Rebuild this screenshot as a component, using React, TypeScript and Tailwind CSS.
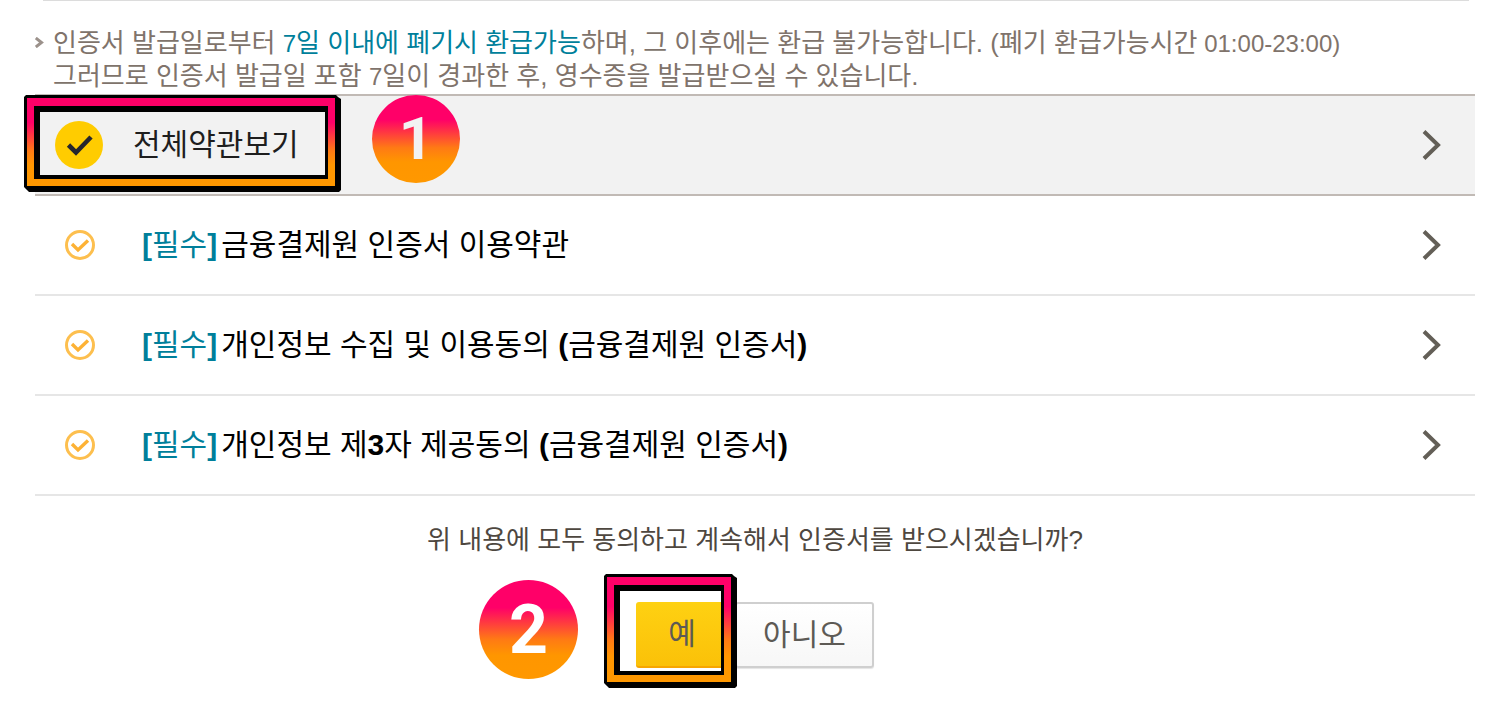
import React, { useId, useState } from "react";

const GRADIENT_STOPS = [
  { offset: "0%", color: "#ff0068" },
  { offset: "28%", color: "#ff0068" },
  { offset: "60%", color: "#ff7a14" },
  { offset: "76%", color: "#ff9600" },
  { offset: "100%", color: "#ff9800" },
];

function Stops() {
  return (
    <>
      {GRADIENT_STOPS.map((s) => (
        <stop key={s.offset} offset={s.offset} stopColor={s.color} />
      ))}
    </>
  );
}

function HighlightFrame({ width, height, className }: { width: number; height: number; className: string }) {
  const id = useId();
  const w = width;
  const h = height;
  const inner = `M16 17V${h - 17}H${w - 16}V17Z`;
  return (
    <svg
      aria-hidden="true"
      width={w}
      height={h}
      viewBox={`0 0 ${w} ${h}`}
      className={`pointer-events-none absolute max-w-none ${className}`}
    >
      <defs>
        <linearGradient id={id} x1="0" y1="0" x2="0" y2="1">
          <Stops />
        </linearGradient>
      </defs>
      <path
        fillRule="evenodd"
        d={`M2 0H${w - 5}L${w - 3} 2L${w} 4V${h - 2}L${w - 2} ${h}H5L3 ${h - 2}L0 ${h - 5}V2Z ${inner}`}
      />
      <path
        fillRule="evenodd"
        fill={`url(#${id})`}
        d={`M3 3H${w - 6}V${h - 6}H3Z M10 11V${h - 13}H${w - 13}V11Z`}
      />
    </svg>
  );
}

function StepBadge({ step, className }: { step: number; className: string }) {
  return (
    <span
      className={`pointer-events-none absolute flex items-center justify-center rounded-full bg-[linear-gradient(#ff0068_0%,#ff0068_28%,#ff7a14_60%,#ff9600_76%,#ff9800_100%)] font-[Roboto,sans-serif] font-bold ${className}`}
    >
      {step}
    </span>
  );
}

function Chevron() {
  return (
    <svg aria-hidden="true" width="20" height="32" viewBox="0 0 20 32" fill="none" stroke="#635f57" strokeWidth="4">
      <path d="M2 2.5L16 16L2 29.5" />
    </svg>
  );
}

function DetailButton({ label }: { label: string }) {
  return (
    <button type="button" aria-label={label} className="mr-[33px] ml-auto shrink-0 cursor-pointer">
      <Chevron />
    </button>
  );
}

const TERMS = [
  { id: "term-1", parts: [{ text: "금융결제원 인증서 이용약관" }] },
  {
    id: "term-2",
    parts: [
      { text: "개인정보 수집 및 이용동의 " },
      { text: "(", strong: true },
      { text: "금융결제원 인증서" },
      { text: ")", strong: true },
    ],
  },
  {
    id: "term-3",
    parts: [
      { text: "개인정보 제" },
      { text: "3", strong: true },
      { text: "자 제공동의 " },
      { text: "(", strong: true },
      { text: "금융결제원 인증서" },
      { text: ")", strong: true },
    ],
  },
] as { id: string; parts: { text: string; strong?: boolean }[] }[];

export default function App() {
  const [checked, setChecked] = useState<Record<string, boolean>>({
    "term-1": true,
    "term-2": true,
    "term-3": true,
  });
  const all = TERMS.every((t) => checked[t.id]);

  return (
    <main
      lang="ko"
      className="overflow-hidden bg-white pr-[37px] pb-8 pl-[35px] font-['Liberation_Sans','Noto_Sans_CJK_KR',sans-serif] text-[30px] leading-10 text-black"
    >
      <div className="mr-[6px] ml-2 h-px bg-[#dcdcdc]" />

      <div className="flex pt-[26px] pb-px text-[26px] leading-[33px] text-[#80736b]">
        <svg aria-hidden="true" className="mt-[10px] mr-[9px] shrink-0" width="9" height="11" viewBox="0 0 9 11" fill="none" stroke="#9b918b" strokeWidth="3">
          <path d="M0.8 1L6.5 5.5L0.8 10" />
        </svg>
        <p>
          인증서 발급일로부터 <span className="text-[#007f9b]"><span className="text-2xl leading-none">7</span>일 이내에 폐기시 환급가능</span>
          하며, 그 이후에는 환급 불가능합니다. (폐기 환급가능시간<span className="text-2xl leading-none"> 01:00-23:00)</span>
          <br />
          그러므로 인증서 발급일 포함 <span className="text-2xl leading-none">7</span>일이 경과한 후, 영수증을 발급받으실 수 있습니다.
        </p>
      </div>

      <div className="relative flex h-[102px] items-center border-y-2 border-[#c1bab5] bg-[#f2f2f2]">
        <label className="ml-5 flex cursor-pointer items-center text-[#1e1e1e]">
          <span className="mr-[30px] grid size-12 shrink-0">
            <input
              type="checkbox"
              checked={all}
              onChange={() => setChecked(Object.fromEntries(TERMS.map((t) => [t.id, !all])))}
              className="col-start-1 row-start-1 size-12 cursor-pointer appearance-none rounded-full bg-[#ffcc00]"
            />
            {all && (
              <svg aria-hidden="true" className="pointer-events-none col-start-1 row-start-1" width="48" height="48" viewBox="0 0 48 48" fill="none" stroke="#25262e" strokeWidth="4.6">
                <path d="M13.5 24L21 31.5L36 16" />
              </svg>
            )}
          </span>
          전체약관보기
        </label>
        <DetailButton label="전체약관 상세보기" />
        <HighlightFrame width={317} height={97} className="-top-px -left-[11px]" />
        <StepBadge step={1} className="-top-px left-[337px] size-[88px] text-6xl text-[#f2f2f2]" />
      </div>

      <ul>
        {TERMS.map((t) => (
          <li key={t.id} className="flex h-[100px] items-center border-b-2 border-[#e6e6e6]">
            <label className="ml-[30px] flex cursor-pointer items-center">
              <span className="mr-[47px] grid size-[30px] shrink-0">
                <input
                  type="checkbox"
                  checked={!!checked[t.id]}
                  onChange={() => setChecked({ ...checked, [t.id]: !checked[t.id] })}
                  className="col-start-1 row-start-1 size-[30px] cursor-pointer appearance-none rounded-full border-[3px] border-[#fdbf4e]"
                />
                {checked[t.id] && (
                  <svg aria-hidden="true" className="pointer-events-none col-start-1 row-start-1" width="30" height="30" viewBox="0 0 30 30" fill="none" stroke="#fdb235" strokeWidth="3.4">
                    <path d="M7 14L13 20L23 10.5" />
                  </svg>
                )}
              </span>
              <span>
                <span className="mr-1 text-[#007f9b]">
                  <b>[</b>필수<b>]</b>
                </span>
                {t.parts.map((p, i) => (p.strong ? <b key={i}>{p.text}</b> : <React.Fragment key={i}>{p.text}</React.Fragment>))}
              </span>
            </label>
            <DetailButton label="약관 상세보기" />
          </li>
        ))}
      </ul>

      <p className="mt-7 text-center text-[26px] leading-[33px] text-[#4e473f]">
        위 내용에 모두 동의하고 계속해서 인증서를 받으시겠습니까?
      </p>

      <div className="mt-[45px] flex justify-center">
        <div className="relative flex gap-[7px] text-[#5d5a55]">
          <button
            type="button"
            className="h-[66px] w-[92px] cursor-pointer rounded-[3px] border-b-2 border-[#f7a600] bg-linear-to-b from-[#fed112] to-[#fbc108]"
          >
            예
          </button>
          <button
            type="button"
            className="h-[66px] w-[139px] cursor-pointer rounded-[3px] border-2 border-[#cfcfcf] bg-linear-to-b from-white to-[#f7f7f7] shadow-[0_1px_1px_#e4e4e4]"
          >
            아니오
          </button>
          <HighlightFrame width={133} height={114} className="-top-7 -left-8" />
          <StepBadge step={2} className="-top-[22px] -left-[157px] size-[99px] text-[68px] text-white" />
        </div>
      </div>
    </main>
  );
}
